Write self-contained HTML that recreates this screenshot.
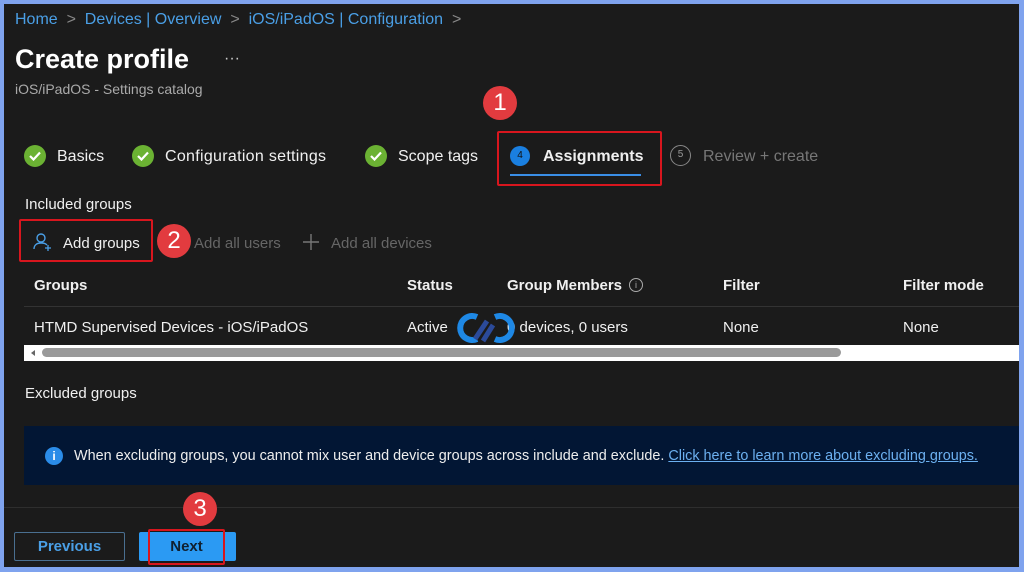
<!DOCTYPE html>
<html><head><meta charset="utf-8"><style>
*{margin:0;padding:0;box-sizing:border-box}
body{width:1024px;height:572px;background:#7fa3ee;position:relative;overflow:hidden;font-family:"Liberation Sans",sans-serif}
#c{position:absolute;left:4px;top:4px;width:1015px;height:563px;background:#1b1b1b}
.a{position:absolute;white-space:nowrap}
.chk{position:absolute;width:22px;height:22px;border-radius:50%;background:#6bb233}
.chk svg{position:absolute;left:5px;top:6px}
.badge{position:absolute;width:34px;height:34px;border-radius:50%;background:#e23b3f;color:#fff;font-size:24px;text-align:center;line-height:34px}
.red{position:absolute;border:2px solid #d8161e;border-radius:2px}
.w{color:#f0f0f0;font-size:15px}
.t{color:#f0f0f0;font-size:16px}
.h{color:#f0f0f0;font-size:15px;font-weight:bold}
</style></head><body>
<div id="c"></div>
<div class="a" style="left:15px;top:11px;font-size:16px;color:#4a9fe6">Home <span style="color:#888">&nbsp;&gt;&nbsp;</span> Devices | Overview <span style="color:#888">&nbsp;&gt;&nbsp;</span> iOS/iPadOS | Configuration <span style="color:#888">&nbsp;&gt;</span></div>
<div class="a" style="left:15px;top:44px;font-size:27px;font-weight:bold;color:#fff">Create profile</div>
<div class="a" style="left:224px;top:50px;font-size:16px;color:#ccc">···</div>
<div class="a" style="left:15px;top:81px;font-size:14px;color:#aaa">iOS/iPadOS - Settings catalog</div>

<div class="chk" style="left:24px;top:145px"><svg width="12" height="10"><path d="M1 5l3.5 3.5L11 1.5" stroke="#fff" stroke-width="2.2" fill="none"/></svg></div>
<div class="a t" style="left:57px;top:148px">Basics</div>
<div class="chk" style="left:132px;top:145px"><svg width="12" height="10"><path d="M1 5l3.5 3.5L11 1.5" stroke="#fff" stroke-width="2.2" fill="none"/></svg></div>
<div class="a t" style="left:165px;top:148px;letter-spacing:0.3px">Configuration settings</div>
<div class="chk" style="left:365px;top:145px"><svg width="12" height="10"><path d="M1 5l3.5 3.5L11 1.5" stroke="#fff" stroke-width="2.2" fill="none"/></svg></div>
<div class="a t" style="left:398px;top:148px">Scope tags</div>
<div class="a" style="left:510px;top:146px;width:20px;height:20px;border-radius:50%;background:#1a7fe0;color:#111;font-size:10px;text-align:center;line-height:20px">4</div>
<div class="a t" style="left:543px;top:148px;font-weight:bold">Assignments</div>
<div class="a" style="left:510px;top:174px;width:131px;height:2px;background:#3a8ee6"></div>
<div class="red" style="left:497px;top:131px;width:165px;height:55px"></div>
<div class="a" style="left:670px;top:145px;width:21px;height:21px;border-radius:50%;border:1.5px solid #888;color:#999;font-size:10px;text-align:center;line-height:18px">5</div>
<div class="a" style="left:703px;top:148px;font-size:16px;color:#777">Review + create</div>
<div class="badge" style="left:483px;top:86px">1</div>

<div class="a w" style="left:25px;top:196px">Included groups</div>
<svg class="a" style="left:33px;top:232px" width="20" height="20"><circle cx="8" cy="6" r="4" stroke="#4a9fe6" stroke-width="1.4" fill="none"/><path d="M1 17c0-4 3-6 7-6s5 1 6 2" stroke="#4a9fe6" stroke-width="1.4" fill="none"/><path d="M15 13v6M12 16h6" stroke="#4a9fe6" stroke-width="1.3"/></svg>
<div class="a w" style="left:63px;top:235px">Add groups</div>
<div class="red" style="left:19px;top:219px;width:134px;height:43px"></div>
<div class="badge" style="left:157px;top:224px">2</div>
<div class="a" style="left:194px;top:235px;font-size:15px;color:#666">Add all users</div>
<svg class="a" style="left:302px;top:233px" width="18" height="18"><path d="M9 1v16M1 9h16" stroke="#777" stroke-width="1.4"/></svg>
<div class="a" style="left:331px;top:235px;font-size:15px;color:#666">Add all devices</div>

<div class="a h" style="left:34px;top:277px">Groups</div>
<div class="a h" style="left:407px;top:277px">Status</div>
<div class="a h" style="left:507px;top:277px">Group Members</div>
<div class="a" style="left:629px;top:278px;width:14px;height:14px;border-radius:50%;border:1px solid #aaa;color:#aaa;font-size:9px;text-align:center;line-height:12px">i</div>
<div class="a h" style="left:723px;top:277px">Filter</div>
<div class="a h" style="left:903px;top:277px">Filter mode</div>
<div class="a" style="left:24px;top:306px;width:995px;height:1px;background:#333"></div>
<div class="a w" style="left:34px;top:319px">HTMD Supervised Devices - iOS/iPadOS</div>
<div class="a w" style="left:407px;top:319px">Active</div>
<div class="a w" style="left:507px;top:319px">0 devices, 0 users</div>
<div class="a w" style="left:723px;top:319px">None</div>
<div class="a w" style="left:903px;top:319px">None</div>
<svg class="a" style="left:455px;top:309px" width="62" height="46"><path d="M22 8a12 12 0 1 0 0 22" stroke="#1e88e5" stroke-width="6" fill="none"/><path d="M40 8a12 12 0 1 1 0 22" stroke="#1e88e5" stroke-width="6" fill="none"/><path d="M20 30l12-18M28 32l10-16" stroke="#2b4a9a" stroke-width="5"/><text x="2" y="44" font-size="6" fill="#3a6fd0" font-family="Liberation Sans">HTMD Community</text></svg>
<div class="a" style="left:24px;top:345px;width:995px;height:16px;background:#fff"></div>
<div class="a" style="left:31px;top:350px;width:0;height:0;border-top:3px solid transparent;border-bottom:3px solid transparent;border-right:4px solid #666"></div>
<div class="a" style="left:42px;top:348px;width:799px;height:9px;border-radius:5px;background:#9a9a9a"></div>

<div class="a w" style="left:25px;top:385px">Excluded groups</div>
<div class="a" style="left:24px;top:426px;width:995px;height:59px;background:#021634"></div>
<div class="a" style="left:45px;top:447px;width:18px;height:18px;border-radius:50%;background:#2b8ce8;color:#fff;font-size:12px;font-weight:bold;text-align:center;line-height:18px">i</div>
<div class="a" style="left:74px;top:448px;font-size:14.4px;color:#eee">When excluding groups, you cannot mix user and device groups across include and exclude. <span style="color:#6cb0f0;text-decoration:underline">Click here to learn more about excluding groups.</span></div>
<div class="a" style="left:4px;top:507px;width:1015px;height:1px;background:#2e2e2e"></div>

<div class="a" style="left:14px;top:532px;width:111px;height:29px;border:1px solid #4a6f90;border-radius:2px;color:#4a9fe6;font-size:15px;font-weight:bold;text-align:center;line-height:27px">Previous</div>
<div class="a" style="left:139px;top:532px;width:97px;height:29px;background:#2b9af3;border-radius:2px;color:#102030;font-size:15px;font-weight:bold;text-align:center;line-height:29px;padding-right:2px">Next</div>
<div class="red" style="left:148px;top:529px;width:77px;height:36px"></div>
<div class="badge" style="left:183px;top:492px">3</div>
</body></html>
